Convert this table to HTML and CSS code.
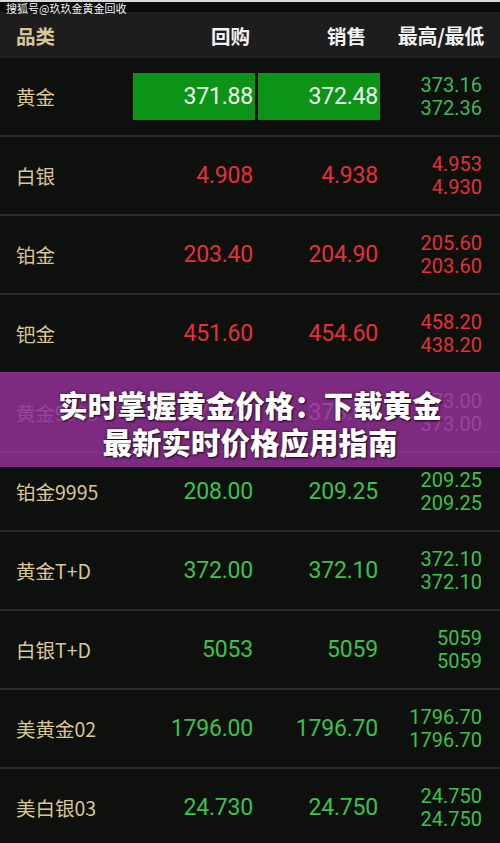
FILE: index.html
```html
<!DOCTYPE html>
<html lang="zh">
<head>
<meta charset="utf-8">
<link rel="stylesheet" href="styles.css">
</head>
<body>
<div class="screen">
  <div class="topbar"><span class="mark">搜狐号@玖玖金黄金回收</span></div>
  <div class="head">
    <div class="c-name">品类</div>
    <div class="c-num">回购</div>
    <div class="c-num c-sell">销售</div>
    <div class="c-hl">最高/最低</div>
  </div>
  <div class="list">
    <div class="row">
      <div class="c-name">黄金</div>
      <div class="c-num box">371.88</div>
      <div class="c-num box c-sell">372.48</div>
      <div class="c-hl up"><span>373.16</span><span>372.36</span></div>
    </div>
    <div class="row down">
      <div class="c-name">白银</div>
      <div class="c-num">4.908</div>
      <div class="c-num c-sell">4.938</div>
      <div class="c-hl"><span>4.953</span><span>4.930</span></div>
    </div>
    <div class="row down">
      <div class="c-name">铂金</div>
      <div class="c-num">203.40</div>
      <div class="c-num c-sell">204.90</div>
      <div class="c-hl"><span>205.60</span><span>203.60</span></div>
    </div>
    <div class="row down">
      <div class="c-name">钯金</div>
      <div class="c-num">451.60</div>
      <div class="c-num c-sell">454.60</div>
      <div class="c-hl"><span>458.20</span><span>438.20</span></div>
    </div>
    <div class="row hidden-row">
      <div class="c-name">黄金9995</div>
      <div class="c-num">372.20</div>
      <div class="c-num c-sell">373.00</div>
      <div class="c-hl"><span>373.00</span><span>373.00</span></div>
    </div>
    <div class="row up">
      <div class="c-name">铂金9995</div>
      <div class="c-num">208.00</div>
      <div class="c-num c-sell">209.25</div>
      <div class="c-hl"><span>209.25</span><span>209.25</span></div>
    </div>
    <div class="row up">
      <div class="c-name">黄金T+D</div>
      <div class="c-num">372.00</div>
      <div class="c-num c-sell">372.10</div>
      <div class="c-hl"><span>372.10</span><span>372.10</span></div>
    </div>
    <div class="row up">
      <div class="c-name">白银T+D</div>
      <div class="c-num">5053</div>
      <div class="c-num c-sell">5059</div>
      <div class="c-hl"><span>5059</span><span>5059</span></div>
    </div>
    <div class="row up">
      <div class="c-name">美黄金02</div>
      <div class="c-num">1796.00</div>
      <div class="c-num c-sell">1796.70</div>
      <div class="c-hl"><span>1796.70</span><span>1796.70</span></div>
    </div>
    <div class="row up">
      <div class="c-name">美白银03</div>
      <div class="c-num">24.730</div>
      <div class="c-num c-sell">24.750</div>
      <div class="c-hl"><span>24.750</span><span>24.750</span></div>
    </div>
    <div class="banner">
      <div class="banner-text">实时掌握黄金价格：下载黄金<br>最新实时价格应用指南</div>
    </div>
  </div>
</div>
</body>
</html>
```

FILE: styles.css
```css
html, body {
  margin: 0;
  padding: 0;
  background: #0e100e;
}
.screen {
  width: 500px;
  height: 843px;
  overflow: hidden;
  background: #0e100e;
  font-family: Roboto, "Noto Sans CJK SC", sans-serif;
}
.topbar {
  height: 10px;
  border-top: 2px solid #d8d8d8;
  background: #0a0a0a;
  position: relative;
}
.mark {
  position: absolute;
  left: 6px;
  top: -1px;
  font-family: "Noto Sans CJK SC", sans-serif;
  font-size: 11px;
  line-height: 14px;
  color: #f4f4f4;
  z-index: 2;
}
.head {
  height: 46px;
  background: #1d1d1d;
  display: grid;
  grid-template-columns: 133px 122px 125px 1fr;
  align-items: center;
  color: #f2f2f2;
  font-family: "Noto Sans CJK SC", sans-serif;
  font-weight: 700;
  font-size: 19.5px;
}
.head .c-name { padding-left: 16px; }
.head .c-num { text-align: right; padding-right: 5px; }
.head .c-sell { padding-right: 14px; }
.head .c-hl { text-align: right; padding-right: 16px; letter-spacing: -0.3px; }

.list {
  position: relative;
}
.row {
  height: 77px;
  border-bottom: 2px solid #2a2c2a;
  display: grid;
  grid-template-columns: 133px 122px 125px 1fr;
  align-items: center;
}
.c-name {
  padding-left: 16px;
  font-family: "Noto Sans CJK SC", sans-serif;
  font-size: 19.5px;
  color: #d8c698;
}
.row .c-num {
  text-align: right;
  padding-right: 2px;
  font-size: 23px;
  letter-spacing: -0.2px;
}
.row .c-sell {
  margin-left: 3px;
}
.box {
  background: #0b9416;
  color: #f2f5f0;
  height: 47px;
  line-height: 47px;
}
.c-hl {
  display: flex;
  flex-direction: column;
  align-items: flex-end;
  padding-right: 18px;
  font-size: 20px;
  line-height: 23px;
}
.up { color: #3dc04c; }
.row .c-hl.up { color: #40b858; }
.down { color: #e3303a; }
.hidden-row { color: #8c8c8c; }
.hidden-row .c-name { color: #8c8c8c; }

.banner {
  position: absolute;
  left: 0;
  right: 0;
  top: 314px;
  height: 95px;
  background: rgba(154, 50, 158, 0.8);
  display: flex;
  align-items: center;
  justify-content: center;
}
.banner-text {
  font-family: "Noto Sans CJK SC", sans-serif;
  font-weight: 900;
  font-size: 29.5px;
  line-height: 37px;
  color: #ffffff;
  text-align: center;
  text-shadow: 1px 1px 2px rgba(0,0,0,0.75), 0 0 3px rgba(0,0,0,0.5);
  margin-top: 6px;
}
```
